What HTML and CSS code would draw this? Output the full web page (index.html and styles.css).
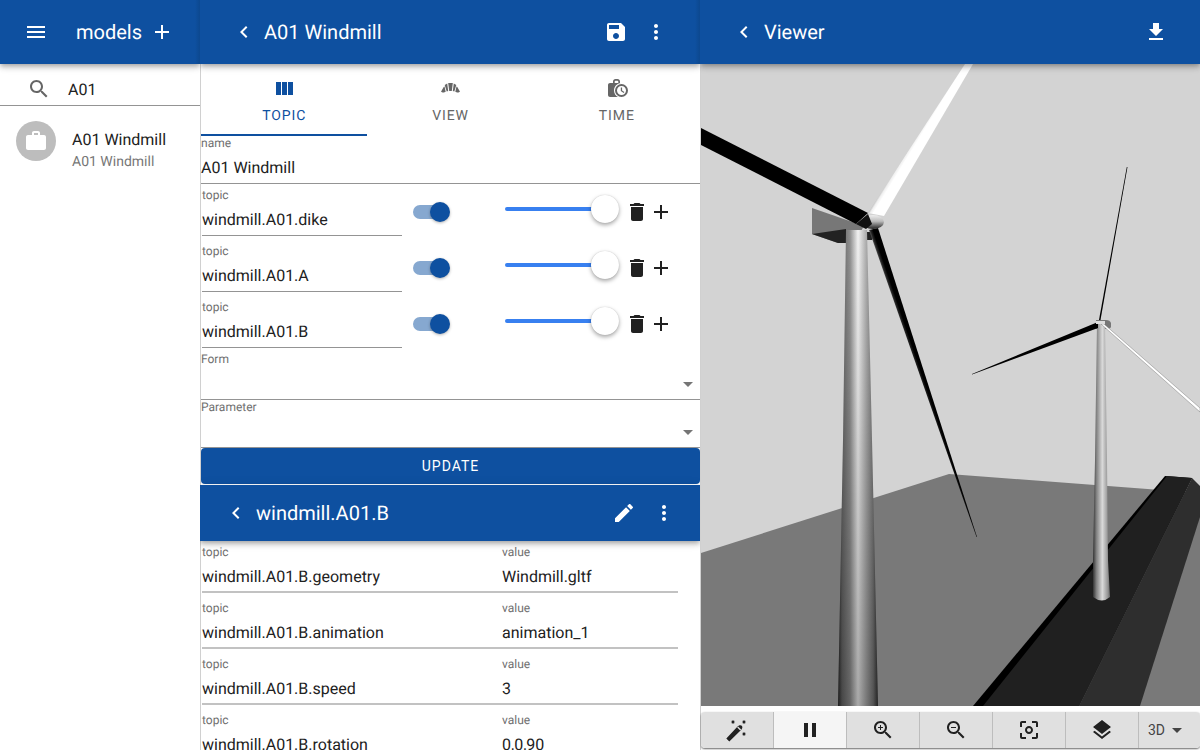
FILE: index.html
```html
<!DOCTYPE html>
<html lang="en">
<head>
    <meta charset="UTF-8">
    <title>Viewer</title>
    <link rel="stylesheet" href="styles.css">
</head>
<body>
    <svg class="icon-defs" width="0" height="0">
        <defs>
            <symbol id="i-menu" viewBox="0 0 24 24"><path d="M3 18h18v-2H3v2zm0-5h18v-2H3v2zm0-7v2h18V6H3z"/></symbol>
            <symbol id="i-add" viewBox="0 0 24 24"><path d="M19 13h-6v6h-2v-6H5v-2h6V5h2v6h6v2z"/></symbol>
            <symbol id="i-back" viewBox="0 0 24 24"><path d="M15.41 7.41L14 6l-6 6 6 6 1.41-1.41L10.83 12z"/></symbol>
            <symbol id="i-more" viewBox="0 0 24 24"><path d="M12 8c1.1 0 2-.9 2-2s-.9-2-2-2-2 .9-2 2 .9 2 2 2zm0 2c-1.1 0-2 .9-2 2s.9 2 2 2 2-.9 2-2-.9-2-2-2zm0 6c-1.1 0-2 .9-2 2s.9 2 2 2 2-.9 2-2-.9-2-2-2z"/></symbol>
            <symbol id="i-delete" viewBox="0 0 24 24"><path d="M6 19c0 1.1.9 2 2 2h8c1.1 0 2-.9 2-2V7H6v12zM19 4h-3.5l-1-1h-5l-1 1H5v2h14V4z"/></symbol>
            <symbol id="i-drop" viewBox="0 0 24 24"><path d="M7 10l5 5 5-5z"/></symbol>
            <symbol id="i-search" viewBox="0 0 24 24"><path d="M15.5 14h-.79l-.28-.27C15.41 12.59 16 11.11 16 9.5 16 5.91 13.09 3 9.5 3S3 5.91 3 9.5 5.91 16 9.5 16c1.61 0 3.09-.59 4.23-1.57l.27.28v.79l5 4.99L20.49 19l-4.99-5zm-6 0C7.01 14 5 11.99 5 9.5S7.01 5 9.5 5 14 7.01 14 9.5 11.99 14 9.5 14z"/></symbol>
        </defs>
    </svg>

    <div class="app">
        <!-- models -->
        <aside class="pane pane-models">
            <header class="toolbar toolbar-edge">
                <svg class="icon menu-btn"><use href="#i-menu"/></svg>
                <span class="toolbar-title title-models">models</span>
                <svg class="icon add-btn"><use href="#i-add"/></svg>
            </header>
            <div class="search">
                <svg class="icon search-icon"><use href="#i-search"/></svg>
                <span>A01</span>
            </div>
            <div class="model-item">
                <div class="avatar">
                    <svg class="icon" viewBox="0 0 24 24"><path d="M20 6h-4V4c0-1.11-.89-2-2-2h-4c-1.11 0-2 .89-2 2v2H4c-1.11 0-1.99.89-1.99 2L2 19c0 1.11.89 2 2 2h16c1.11 0 2-.89 2-2V8c0-1.11-.89-2-2-2zm-6 0h-4V4h4v2z"/></svg>
                </div>
                <div class="model-text">
                    <div class="model-name">A01 Windmill</div>
                    <div class="model-sub">A01 Windmill</div>
                </div>
            </div>
        </aside>

        <!-- editor -->
        <main class="pane pane-editor">
            <header class="toolbar toolbar-edge">
                <svg class="icon back-btn"><use href="#i-back"/></svg>
                <span class="toolbar-title">A01 Windmill</span>
                <span class="spacer"></span>
                <svg class="icon action" viewBox="0 0 24 24"><path d="M17 3H5c-1.11 0-2 .9-2 2v14c0 1.1.89 2 2 2h14c1.1 0 2-.9 2-2V7l-4-4zm-5 16c-1.66 0-3-1.34-3-3s1.34-3 3-3 3 1.34 3 3-1.34 3-3 3zm3-10H5V5h10v4z"/></svg>
                <svg class="icon action"><use href="#i-more"/></svg>
            </header>

            <div class="editor-body">
                <nav class="tabs">
                    <div class="tab tab-active">
                        <svg class="icon" viewBox="0 0 24 24"><path d="M10 18h5V5h-5v13zm-6 0h5V5H4v13zM16 5v13h5V5h-5z"/></svg>
                        <span>TOPIC</span>
                    </div>
                    <div class="tab">
                        <svg class="icon" viewBox="0 0 24 24"><path d="M10.200 6h4.600l-1 8h-2.600zM6.700 7.900l2.500-1.500 1 7.700-1.500.5zM18.300 7.900l-2.500-1.500-1 7.700 1.500.5zM3 14.800l2.700-4.800.8-.6 1.200 5.400-1.800.8-1.300-.1zM22 14.800l-2.700-4.800-.8-.6-1.200 5.400 1.800.8 1.300-.1z"/></svg>
                        <span>VIEW</span>
                    </div>
                    <div class="tab">
                        <svg class="icon" viewBox="0 0 24 24"><path d="M8 6V4.500C8 3.100 9.100 2 10.500 2h2C13.900 2 15 3.100 15 4.500V6h-1.700V4.500c0-.4-.4-.8-.8-.8h-2c-.4 0-.8.400-.8.800V6zM3 8c0-1.100.9-2 2-2h11c-3.900.3-7 3.500-7 7.500 0 2.900 1.700 5.400 4 6.500H5c-1.100 0-2-.9-2-2z"/><path fill-rule="evenodd" d="M16.500 7a6.500 6.500 0 1 0 0 13 6.500 6.500 0 0 0 0-13zm0 2a4.500 4.500 0 1 1 0 9 4.500 4.500 0 0 1 0-9zM15.800 10.500h1.300v3l2.300 1.400-.7 1-2.900-1.800z"/></svg>
                        <span>TIME</span>
                    </div>
                </nav>

                <div class="field field-wide">
                    <label>name</label>
                    <div class="field-value">A01 Windmill</div>
                </div>

                <div class="topic-row">
                    <div class="field field-topic"><label>topic</label><div class="field-value">windmill.A01.dike</div></div>
                    <div class="toggle"><span class="toggle-thumb"></span></div>
                    <div class="slider"><span class="slider-thumb"></span></div>
                    <svg class="icon row-icon"><use href="#i-delete"/></svg>
                    <svg class="icon row-icon"><use href="#i-add"/></svg>
                </div>
                <div class="topic-row">
                    <div class="field field-topic"><label>topic</label><div class="field-value">windmill.A01.A</div></div>
                    <div class="toggle"><span class="toggle-thumb"></span></div>
                    <div class="slider"><span class="slider-thumb"></span></div>
                    <svg class="icon row-icon"><use href="#i-delete"/></svg>
                    <svg class="icon row-icon"><use href="#i-add"/></svg>
                </div>
                <div class="topic-row">
                    <div class="field field-topic"><label>topic</label><div class="field-value">windmill.A01.B</div></div>
                    <div class="toggle"><span class="toggle-thumb"></span></div>
                    <div class="slider"><span class="slider-thumb"></span></div>
                    <svg class="icon row-icon"><use href="#i-delete"/></svg>
                    <svg class="icon row-icon"><use href="#i-add"/></svg>
                </div>

                <div class="select">
                    <label>Form</label>
                    <div class="select-box"><svg class="icon"><use href="#i-drop"/></svg></div>
                </div>
                <div class="select">
                    <label>Parameter</label>
                    <div class="select-box"><svg class="icon"><use href="#i-drop"/></svg></div>
                </div>

                <button class="update-btn">UPDATE</button>

                <header class="toolbar toolbar-sub">
                    <svg class="icon back-btn"><use href="#i-back"/></svg>
                    <span class="toolbar-title">windmill.A01.B</span>
                    <span class="spacer"></span>
                    <svg class="icon action" viewBox="0 0 24 24"><path d="M3 17.25V21h3.75L17.81 9.94l-3.75-3.75L3 17.25zM20.71 7.04c.39-.39.39-1.02 0-1.41l-2.34-2.34c-.39-.39-1.02-.39-1.41 0l-1.83 1.83 3.75 3.75 1.83-1.83z"/></svg>
                    <svg class="icon action"><use href="#i-more"/></svg>
                </header>

                <div class="prop-list">
                    <div class="prop-row">
                        <div class="prop-cell"><label>topic</label><div class="field-value">windmill.A01.B.geometry</div></div>
                        <div class="prop-cell"><label>value</label><div class="field-value">Windmill.gltf</div></div>
                    </div>
                    <div class="prop-row">
                        <div class="prop-cell"><label>topic</label><div class="field-value">windmill.A01.B.animation</div></div>
                        <div class="prop-cell"><label>value</label><div class="field-value">animation_1</div></div>
                    </div>
                    <div class="prop-row">
                        <div class="prop-cell"><label>topic</label><div class="field-value">windmill.A01.B.speed</div></div>
                        <div class="prop-cell"><label>value</label><div class="field-value">3</div></div>
                    </div>
                    <div class="prop-row">
                        <div class="prop-cell"><label>topic</label><div class="field-value">windmill.A01.B.rotation</div></div>
                        <div class="prop-cell"><label>value</label><div class="field-value">0,0,90</div></div>
                    </div>
                </div>
            </div>
        </main>

        <!-- viewer -->
        <section class="pane pane-viewer">
            <header class="toolbar">
                <svg class="icon back-btn"><use href="#i-back"/></svg>
                <span class="toolbar-title">Viewer</span>
                <span class="spacer"></span>
                <svg class="icon download" viewBox="0 0 24 24"><path d="M19 9h-4V3H9v6H5l7 7 7-7zM5 18v2h14v-2H5z"/></svg>
            </header>

            <div class="viewer-body">
                <svg class="scene" viewBox="701 64 499 642" preserveAspectRatio="none">
                    <defs>
                        <linearGradient id="towerBig" x1="0" x2="1" y1="0" y2="0">
                            <stop offset="0" stop-color="#2a2a2a"/>
                            <stop offset=".1" stop-color="#666"/>
                            <stop offset=".3" stop-color="#8f8f8f"/>
                            <stop offset=".5" stop-color="#f2f2f2"/>
                            <stop offset=".68" stop-color="#b5b5b5"/>
                            <stop offset=".88" stop-color="#777"/>
                            <stop offset="1" stop-color="#333"/>
                        </linearGradient>
                        <linearGradient id="towerShade" x1="0" x2="0" y1="0" y2="1">
                            <stop offset="0" stop-color="#000" stop-opacity="0"/>
                            <stop offset=".3" stop-color="#000" stop-opacity=".08"/>
                            <stop offset="1" stop-color="#000" stop-opacity=".3"/>
                        </linearGradient>
                        <linearGradient id="towerSmall" x1="0" x2="1" y1="0" y2="0">
                            <stop offset="0" stop-color="#333"/>
                            <stop offset=".2" stop-color="#808080"/>
                            <stop offset=".55" stop-color="#dadada"/>
                            <stop offset=".85" stop-color="#999"/>
                            <stop offset="1" stop-color="#6a6a6a"/>
                        </linearGradient>
                        <linearGradient id="bladeWhite" gradientUnits="userSpaceOnUse" x1="869" y1="210.700" x2="883" y2="219.300">
                            <stop offset="0" stop-color="#bbb"/>
                            <stop offset=".14" stop-color="#f0f0f0"/>
                            <stop offset=".3" stop-color="#fff"/>
                            <stop offset=".96" stop-color="#fff"/>
                            <stop offset="1" stop-color="#888"/>
                        </linearGradient>
                        <linearGradient id="bladeDark" gradientUnits="userSpaceOnUse" x1="868" y1="232" x2="878" y2="228.600">
                            <stop offset="0" stop-color="#888"/>
                            <stop offset=".3" stop-color="#222"/>
                            <stop offset=".5" stop-color="#000"/>
                            <stop offset="1" stop-color="#000"/>
                        </linearGradient>
                        <linearGradient id="hub" x1="0" x2="0" y1="0" y2="1">
                            <stop offset="0" stop-color="#eee"/>
                            <stop offset=".45" stop-color="#bbb"/>
                            <stop offset="1" stop-color="#222"/>
                        </linearGradient>
                    </defs>
                    <rect x="701" y="64" width="499" height="642" fill="#d3d3d3"/>
                    <polygon points="701,553 949,474 1200,493 1200,706 701,706" fill="#797979"/>
                    <polygon points="973,706 1165,476 1192,478 1079,706" fill="#000"/>
                    <polygon points="983,706 1167,476 1192,478 1079,706" fill="#202020"/>
                    <polygon points="1079,706 1192,478 1200,486 1200,517 1140,706" fill="#2e2e2e"/>

                    <!-- big turbine -->
                    <polygon points="812,208 864,226 858,236 846,243 838,243 812,234" fill="#777"/>
                    <polygon points="812,234 846,229 846,243 838,243" fill="#222"/>
                    <polygon points="864,232 874,232 872,240 864,240" fill="#222"/>
                    <polygon points="846,230 867,230 872,440 878,706 838,706 843,440" fill="url(#towerBig)"/>
                    <polygon points="846,230 867,230 872,440 878,706 838,706 843,440" fill="url(#towerShade)"/>
                    <polygon points="869,230 878,228 977,537 976.500,537" fill="url(#bladeDark)"/>
                    <polygon points="701,128 868,213 856,224 701,145" fill="#000"/>
                    <polygon points="868,213 884,216 973,64 965,64" fill="url(#bladeWhite)"/>
                    <ellipse cx="873" cy="222" rx="11" ry="7" fill="url(#hub)"/>
                    <polygon points="856,224 868,214 872,224 866,229" fill="#111"/>

                    <!-- small turbine -->
                    <path d="M1096,320h10q4,0 5,3v4q-1,2 -5,2h-10z" fill="#777"/>
                    <path d="M1097,323H1105L1107,460L1108,560L1110,597Q1102,604 1093,597L1093,560L1095,460Z" fill="url(#towerSmall)"/>
                    <polygon points="1099,320 1100.500,320 1127.500,167 1126.800,167" fill="#000"/>
                    <polygon points="1098,322 1098,328 972,374.500 972,374" fill="#000"/>
                    <polygon points="1101,324 1104,324 1200,408 1200,412" fill="#fff" stroke="#666" stroke-width=".4"/>
                    <rect x="1096" y="321" width="9" height="3" fill="#ddd"/>
                </svg>

                <div class="viewer-gap"></div>

                <div class="button-group">
                    <button class="view-btn">
                        <svg class="icon" viewBox="0 0 24 24">
                            <path d="M4.300 23.500L1.300 20.500 12.800 8.300c1-1 2.900-1.700 4-.6 1.100 1.100.5 3-.5 4z"/>
                            <path fill="#e0e0e0" d="M12.200 9.500l.9-1 3.100 3.100-1 .9z"/>
                            <path fill="none" stroke="currentColor" stroke-width="1.300" d="M6.800 2.800l2.400 2.400m0-2.400l-2.400 2.400M17.800 2.800l2.400 2.400m0-2.400l-2.400 2.400M17.800 14.800l2.400 2.400m0-2.400l-2.400 2.400"/>
                        </svg>
                    </button>
                    <button class="view-btn view-btn-on">
                        <svg class="icon" viewBox="0 0 24 24"><path d="M6 19h4V5H6v14zm8-14v14h4V5h-4z"/></svg>
                    </button>
                    <button class="view-btn">
                        <svg class="icon" viewBox="0 0 24 24"><path d="M15.500 14h-.79l-.28-.27C15.410 12.590 16 11.110 16 9.500 16 5.910 13.090 3 9.500 3S3 5.910 3 9.500 5.910 16 9.500 16c1.610 0 3.090-.59 4.230-1.570l.27.280v.79l5 4.990L20.490 19l-4.990-5zm-6 0C7.010 14 5 11.990 5 9.500S7.010 5 9.500 5 14 7.010 14 9.500 11.990 14 9.500 14z"/><path d="M12 10h-2v2H9v-2H7V9h2V7h1v2h2v1z"/></svg>
                    </button>
                    <button class="view-btn">
                        <svg class="icon" viewBox="0 0 24 24"><path d="M15.500 14h-.79l-.28-.27C15.410 12.590 16 11.110 16 9.500 16 5.910 13.090 3 9.500 3S3 5.910 3 9.500 5.910 16 9.500 16c1.610 0 3.090-.59 4.230-1.570l.27.280v.79l5 4.990L20.490 19l-4.990-5zm-6 0C7.010 14 5 11.990 5 9.500S7.010 5 9.500 5 14 7.010 14 9.500 11.990 14 9.500 14zM7 9h5v1H7z"/></svg>
                    </button>
                    <button class="view-btn">
                        <svg class="icon" viewBox="0 0 24 24"><path d="M5 15H3v4c0 1.100.9 2 2 2h4v-2H5v-4zM5 5h4V3H5c-1.100 0-2 .9-2 2v4h2V5zm14-2h-4v2h4v4h2V5c0-1.100-.9-2-2-2zm0 16h-4v2h4c1.100 0 2-.9 2-2v-4h-2v4zM12 8c-2.210 0-4 1.790-4 4s1.790 4 4 4 4-1.790 4-4-1.790-4-4-4zm0 6c-1.100 0-2-.9-2-2s.9-2 2-2 2 .9 2 2-.9 2-2 2z"/></svg>
                    </button>
                    <button class="view-btn">
                        <svg class="icon" viewBox="0 0 24 24"><path d="M11.990 18.540l-7.370-5.730L3 14.070l9 7 9-7-1.630-1.270-7.380 5.720zM12 16l7.360-5.730L21 9l-9-7-9 7 1.630 1.270L12 16z"/></svg>
                    </button>
                    <button class="view-btn view-btn-mode">
                        <span>3D</span>
                        <svg class="icon"><use href="#i-drop"/></svg>
                    </button>
                </div>
            </div>
        </section>
    </div>
</body>
</html>
```

FILE: styles.css
```css
:root {
    --primary: #0e50a0;
    --text: #212121;
    --muted: #6f6f6f;
    --line: #949494;
}

* {
    box-sizing: border-box;
}

html, body {
    margin: 0;
    height: 100%;
    overflow: hidden;
    background: #fff;
}

body {
    font-family: Roboto, "Liberation Sans", sans-serif;
    color: var(--text);
    text-rendering: geometricPrecision;
}

.icon-defs {
    position: absolute;
}

.icon {
    width: 24px;
    height: 24px;
    fill: currentColor;
    flex: none;
    display: block;
}

.app {
    display: flex;
    height: 750px;
}

.pane {
    display: flex;
    flex-direction: column;
    height: 100%;
    overflow: hidden;
}

.pane-models {
    width: 200px;
}

.pane-editor {
    width: 500px;
}

.pane-viewer {
    width: 500px;
}

.toolbar {
    display: flex;
    align-items: center;
    height: 64px;
    flex: none;
    background: var(--primary);
    color: #fff;
    position: relative;
    z-index: 2;
    box-shadow: 0 2px 4px -1px rgba(0, 0, 0, .2), 0 4px 5px rgba(0, 0, 0, .14), 0 1px 10px rgba(0, 0, 0, .12);
}

/* next pane's shadow falls on the right of the bar */
.toolbar-edge {
    background: linear-gradient(to right, var(--primary) calc(100% - 5px), #0c488f);
}

.toolbar-title {
    font-size: 20px;
    font-weight: 400;
}

.spacer {
    flex: 1;
}

.menu-btn {
    margin-left: 24px;
}

.title-models {
    margin-left: 28px;
}

.add-btn {
    margin-left: 8px;
}

.back-btn {
    margin-left: 32px;
    margin-right: 8px;
}

.action {
    margin-right: 16px;
}

.action:last-child {
    margin-right: 32px;
}

.download {
    margin-right: 32px;
}

/* left list */
.search {
    display: flex;
    align-items: center;
    height: 42px;
    flex: none;
    padding: 9px 0 0 27px;
    gap: 17px;
    font-size: 16px;
    border-bottom: 1px solid var(--line);
}

.search-icon {
    color: #666;
}

.model-item {
    display: flex;
    align-items: flex-start;
    padding: 15px 16px;
    gap: 16px;
}

.avatar {
    width: 40px;
    height: 40px;
    border-radius: 50%;
    background: #bdbdbd;
    color: #fff;
    display: flex;
    align-items: center;
    justify-content: center;
    flex: none;
}

.model-text {
    margin-top: 8px;
}

.model-name {
    font-size: 16px;
    line-height: 22px;
}

.model-sub {
    font-size: 14px;
    line-height: 20px;
    margin-top: 1px;
    color: #777;
}

/* editor */
.editor-body {
    flex: 1;
    border-left: 1px solid #d0d0d0;
}

.tabs {
    display: flex;
    height: 72px;
}

.tab {
    flex: 1;
    display: flex;
    flex-direction: column;
    align-items: center;
    padding-top: 13px;
    font-size: 14px;
    letter-spacing: .9px;
    color: #666;
    border-bottom: 2px solid transparent;
}

.tab span {
    margin-top: 5px;
    line-height: 20px;
}

.tab-active {
    color: var(--primary);
    border-bottom-color: var(--primary);
}

label {
    display: block;
    font-size: 12px;
    line-height: 14px;
    color: var(--muted);
}

.field-value {
    font-size: 16px;
    line-height: 24px;
    margin-top: 6px;
}

.field {
    height: 48px;
    border-bottom: 1px solid var(--line);
}

.field-wide {
    height: 48px;
}

.field-topic {
    width: 200px;
    margin-left: 1px;
    flex: none;
}

.topic-row {
    display: flex;
    align-items: flex-start;
    height: 56px;
    padding-top: 4px;
}

.toggle {
    width: 34px;
    height: 14px;
    margin: 17px 0 0 11px;
    border-radius: 7px;
    background: #86a8d0;
    display: flex;
    align-items: center;
    justify-content: flex-end;
    flex: none;
}

.toggle-thumb {
    width: 20px;
    height: 20px;
    border-radius: 50%;
    background: var(--primary);
    margin-right: -3px;
    box-shadow: 0 1px 3px rgba(0, 0, 0, .3);
}

.slider {
    width: 100px;
    height: 4px;
    margin: 19px 0 0 58px;
    border-radius: 2px;
    background: #3880f0;
    display: flex;
    align-items: center;
    justify-content: flex-end;
    flex: none;
}

.slider-thumb {
    width: 28px;
    height: 28px;
    border-radius: 50%;
    background: #fff;
    margin-right: -14px;
    flex: none;
    box-shadow: 0 2px 4px rgba(0, 0, 0, .35), 0 0 1px rgba(0, 0, 0, .2);
}

.row-icon {
    margin-top: 12px;
}

.row-icon:nth-of-type(1) {
    margin-left: 20px;
}

.select {
    height: 48px;
    border-bottom: 1px solid var(--line);
}

.select-box {
    display: flex;
    justify-content: flex-end;
    color: #757575;
    margin-top: 6px;
}

.update-btn {
    display: block;
    width: 100%;
    height: 36px;
    background: var(--primary);
    color: #fff;
    border: none;
    border-radius: 4px;
    font-family: inherit;
    font-size: 14px;
    letter-spacing: 1px;
    margin: 0 0 1px;
    padding: 0;
}

.toolbar-sub {
    height: 56px;
    margin-left: -1px;
}

.toolbar-sub .back-btn {
    margin-left: 24px;
}

.toolbar-sub .action:last-child {
    margin-right: 24px;
}

.prop-list {
    padding-left: 1px;
}

.prop-row {
    display: flex;
    width: 476px;
    height: 52px;
    margin-bottom: 4px;
    padding-top: 4px;
    border-bottom: 2px solid #c2c2c2;
}

.prop-cell {
    width: 300px;
}

.prop-cell + .prop-cell {
    width: 176px;
}

/* viewer */
.viewer-body {
    flex: 1;
    border-left: 1px solid #d0d0d0;
}

.scene {
    display: block;
    width: 499px;
    height: 642px;
}

.viewer-gap {
    height: 6px;
}

.button-group {
    display: flex;
    height: 36px;
    border-radius: 4px;
    overflow: hidden;
    box-shadow: 0 1px 2px rgba(0, 0, 0, .6);
}

.view-btn {
    width: 73px;
    flex: none;
    background: #e0e0e0;
    color: #212121;
    border: none;
    border-right: 1px solid #bdbdbd;
    display: flex;
    align-items: center;
    justify-content: center;
    padding: 0;
    font-family: inherit;
}

.view-btn-on {
    background: #f5f5f5;
}

.view-btn-mode {
    flex: 1;
    border-right: none;
    font-size: 14px;
    color: #444;
    padding-right: 2px;
}
```
